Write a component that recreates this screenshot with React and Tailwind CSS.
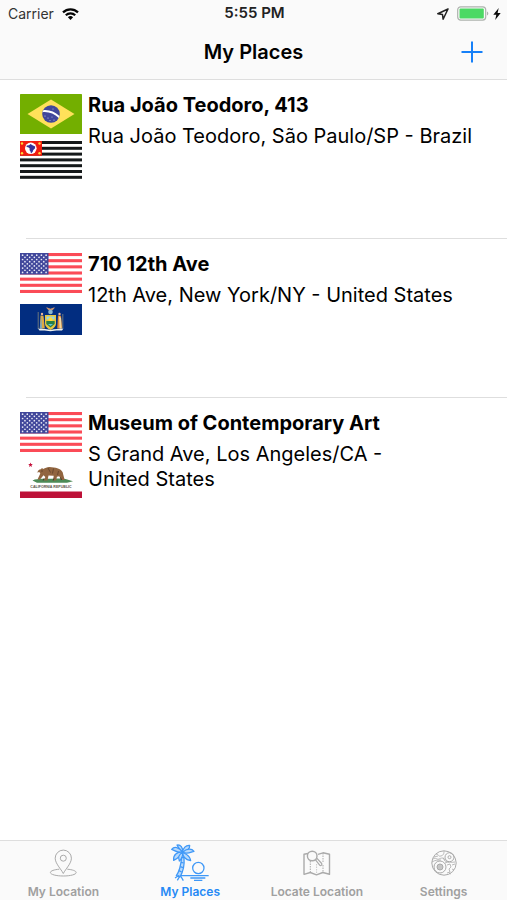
import React, { useState } from "react";

const stripes = [0, 1, 2, 3, 4, 5, 6];

function BrazilFlag() {
  return (
    <svg className="h-10 w-[62px]" viewBox="0 0 62 40" role="img" aria-label="Brazil">
      <rect width="62" height="40" rx="0.6" fill="#73af00" />
      <path d="M31 5.5 54.5 20 31 34.5 7.5 20Z" fill="#ffe15a" />
      <circle cx="31" cy="20" r="8.8" fill="#41479b" />
      <path d="M23.3 16.2c5.800-.6 11.600 1.500 16.200 5.900l-.7 2c-4.500-4.600-10.300-6.600-16.500-5.900Z" fill="#fff" />
      <g fill="#c9cbe6">
        <circle cx="25" cy="22" r="0.6" />
        <circle cx="28" cy="24" r="0.6" />
        <circle cx="32" cy="23" r="0.5" />
        <circle cx="34" cy="26" r="0.6" />
        <circle cx="30" cy="26.500" r="0.5" />
        <circle cx="33" cy="15" r="0.5" />
      </g>
    </svg>
  );
}

function SaoPauloFlag() {
  return (
    <svg className="h-[38px] w-[62px]" viewBox="0 0 62 38" role="img" aria-label="São Paulo">
      <rect width="62" height="38" fill="#fff" />
      {stripes.map((i) => (
        <rect key={i} y={i * 5.8} width="62" height="3" fill="#15191a" />
      ))}
      <rect width="22" height="14.800" fill="#f01c10" />
      <circle cx="10.800" cy="7.300" r="5.800" fill="#fff" />
      <path d="M6.800 4.500 9 4.200l1.500-1.200 2 1.300 2.700 1.200-.3 2-1.600 1.500-.6 1.800-1.700 1.700-.5-2-1-1.500.2-1.500-1.500-1.200-1.700-.2Z" fill="#34349a" />
      <g fill="#ffd83b">
        <circle cx="2" cy="2.500" r="1.200" />
        <circle cx="2" cy="12.300" r="1.200" />
        <circle cx="19.500" cy="2.500" r="1.200" />
        <circle cx="19.500" cy="12.300" r="1.200" />
      </g>
    </svg>
  );
}

function UsaFlag() {
  const stars = [];
  for (let r = 0; r < 9; r++) {
    const n = r % 2 ? 5 : 6;
    for (let c = 0; c < n; c++) {
      stars.push([2.6 + c * 4.7 + (r % 2 ? 2.35 : 0), 2.2 + r * 2.15]);
    }
  }
  return (
    <svg className="h-10 w-[62px]" viewBox="0 0 62 40" role="img" aria-label="United States">
      <rect width="62" height="40" fill="#fff" />
      {stripes.map((i) => (
        <rect key={i} y={i * 6.154} width="62" height="3.077" fill="#fb4b57" />
      ))}
      <rect width="28.500" height="21.500" fill="#41479b" />
      {stars.map(([x, y]) => (
        <circle key={x + "-" + y} cx={x} cy={y} r="0.85" fill="#e9eaf6" />
      ))}
    </svg>
  );
}

function NewYorkFlag() {
  return (
    <svg className="h-[31px] w-[62px]" viewBox="0 0 62 31" role="img" aria-label="New York">
      <rect width="62" height="31" fill="#022d80" />
      <path d="M26 3.500c2 0 3 .6 4.500 1.300C32 4.100 33 3.500 35 3.500l-2.400 2.800h-4Z" fill="#c79470" />
      <circle cx="30.500" cy="8" r="2.300" fill="#8bb4cf" />
      <path d="M25 11h11v8.500c0 3-3 5.500-5.500 6.500-2.500-1-5.500-3.500-5.500-6.500Z" fill="#e6c63f" />
      <path d="M26.500 12.500h8v3h-8Z" fill="#91d3ef" />
      <circle cx="30.500" cy="15.500" r="2.200" fill="#ffdc38" />
      <path d="M26.300 17h8.400v3l-4.200 3.500-4.200-3.500Z" fill="#287e47" />
      <path d="M28 20h5l-2.500 2Z" fill="#5ec4dd" />
      <circle cx="22" cy="10" r="1.200" fill="#e8b69b" />
      <circle cx="39.500" cy="10" r="1.200" fill="#e8b69b" />
      <path d="m20.500 11.500 3 .3 1.300 12.700h-5Z" fill="#dda943" />
      <path d="m21.300 12-1.500 12.500h2Z" fill="#6ca8d3" />
      <path d="m38 11.500 3 .3 1.200 12.700h-5Z" fill="#e58b32" />
      <path d="m39 12 .6 12.500h2L41 14Z" fill="#efd9a2" />
      <path d="M18.200 8v17M42.800 10v14" stroke="#b4a77c" strokeWidth="0.6" />
      <path d="M18 24.500c4 .5 7 0 12.500 1.500 5-1.500 8.500-1 13-1.500l-1.500 2c-4 0-8-.2-11.500.8-4-1-7-.8-11-.8Z" fill="#eef0ea" />
    </svg>
  );
}

function CaliforniaFlag() {
  return (
    <svg className="h-10 w-[62px]" viewBox="0 0 62 40" role="img" aria-label="California">
      <rect width="62" height="40" fill="#fff" />
      <path d="m10.500 4.500.6 1.600h1.700l-1.300 1.100.5 1.700-1.500-1-1.500 1 .5-1.700-1.300-1.100h1.700Z" fill="#c5133d" />
      <path d="M12.500 22.500c3-1.800 6-1 9-1.800 8 .5 16-1 24 .3l7.500 2.300-6 1.400H17Z" fill="#4d8b57" />
      <path d="M17.500 14.300c.3-1.700 1.500-2.700 3.300-3l1.200-1.200 1.200.8c2.300-.6 4-2 6.300-1.800 3 .5 5.500.4 8.500 1.400 3.500 1.300 5 3.300 5.200 6l1.500 5.500h-3.500l-2-3.700-2.300.5-.7 3.700h-3.200l.7-4.700-5.200-.4-1 5.100h-3.400l1.200-3.500-1.800-1.800-3.500 4.300h-2.500l2.800-5.900-1-1.600-2.800.7Z" fill="#91653f" />
      <path d="m28 10 2.500 4.500m3-4-1 5m6-2.500-1 4M21 13h2" stroke="#5f4029" strokeWidth="0.8" />
      <path d="m24 20.500-.8 2m10.800-2-.8 2m7.300-3 1 2.500" stroke="#47362a" />
      <text x="31" y="30" textAnchor="middle" fontFamily="Liberation Sans, sans-serif" fontSize="3.600" fontWeight="700" fill="#5c5348">CALIFORNIA REPUBLIC</text>
      <rect y="33.500" width="62" height="6.500" fill="#bd1138" />
    </svg>
  );
}

function WifiIcon() {
  return (
    <svg className="h-3 w-[17px]" viewBox="0 0 17 12" fill="none" stroke="#050505" strokeWidth="2.200" aria-hidden="true">
      <path d="M1 4.400a10.700 10.700 0 0 1 15 0M3.800 7.300a6.700 6.700 0 0 1 9.400 0" />
      <path d="m8.500 12-2.600-2.700a3.700 3.700 0 0 1 5.200 0Z" fill="#050505" stroke="none" />
    </svg>
  );
}

function StatusIcons() {
  return (
    <div className="flex items-center">
      <svg className="h-3 w-3" viewBox="0 0 12 12" fill="none" stroke="#222" strokeWidth="1.500" strokeLinejoin="round" aria-hidden="true">
        <path d="M11 1 .8 5.700l4.700.8.600 4.700Z" />
      </svg>
      <svg className="ml-2 h-4 w-8" viewBox="0 0 32 16" aria-hidden="true">
        <rect x="0.700" y="0.800" width="28" height="13.300" rx="3" fill="#fafafa" stroke="#adb2ad" strokeWidth="1.200" />
        <rect x="2.500" y="2.600" width="24.300" height="9.800" rx="1" fill="#4cd964" />
        <path d="M30 5.400c1.800.7 1.800 3.500 0 4.200Z" fill="#adb2ad" />
      </svg>
      <svg className="ml-1 h-3 w-2" viewBox="0 0 8 12" fill="#0b0b0b" aria-hidden="true">
        <path d="M5.700 0 .3 6.800h3L2.200 12l5.500-7H4.600Z" />
      </svg>
    </div>
  );
}

function PinIcon() {
  return (
    <svg className="h-7 w-7" viewBox="0 0 28 28" fill="none" stroke="currentColor" strokeWidth="1" aria-hidden="true">
      <path d="M14.300 24.500C12 20 6.200 14.500 6.200 9.200a8.100 8.100 0 0 1 16.200 0c0 5.300-5.800 10.800-8.100 15.300Z" />
      <circle cx="14.300" cy="9.200" r="3" />
      <path d="M10.300 20.200c-5 .4-8.900 1.700-8.900 3.300 0 2 5.800 3.500 12.900 3.500s12.900-1.500 12.900-3.500c0-1.600-3.900-2.900-8.900-3.300" />
    </svg>
  );
}

function PalmIcon() {
  return (
    <svg className="h-[38px] w-[38px]" viewBox="36 12 114 114" fill="none" stroke="currentColor" strokeWidth="3.800" strokeLinejoin="round" aria-hidden="true">
      <g fill="#b9dafc">
        <path d="M71 37C66 30 59 27 54 15c11-2 18 8 17 22Z" />
        <path d="M71 37c1-13 9-22 21-21 1 10-9 17-21 21Z" />
        <path d="M71 37C60 21 46 18 38 28c9 2 15 12 33 9Z" />
        <path d="M71 37c12-12 27-12 34-3-10 2-18 10-34 3Z" />
        <path d="M71 37c-17-2-29 7-27 24 10-5 19-10 27-24Z" />
        <path d="M71 37c-10 5-15 15-10 26 6-5 11-13 10-26Z" />
        <path d="M71 37c7 4 22 8 24 25-13-2-24-10-24-25Z" />
        <path d="M68 52c-2 20-4 38-16 55l11 4c10-17 14-36 12-58Z" />
      </g>
      <path d="m66 67 8 2m-10 11 8 3m-12 9 8 4M61 106l-13 8m14-5-7 12m10-13 8 14" />
      <circle cx="118" cy="84" r="17" />
      <path d="M66 107h83M94 114h45M105 121h25" />
    </svg>
  );
}

function MapIcon() {
  return (
    <svg className="h-7 w-7" viewBox="0 0 28 28" fill="none" stroke="currentColor" strokeWidth="1.400" strokeLinejoin="round" aria-hidden="true">
      <path d="M5 4.500 1 5.300v20l6.300-1.800 6.200 2.300 6.300-2.300 6.700 1.800v-20L20 3.800l-5 1.500" />
      <path d="M7.300 12v11M20 4v9m0 3v7" strokeDasharray="1.500 1" strokeWidth="1" />
      <path d="M13.600 15v10" strokeDasharray="1.500 1" strokeWidth="0.600" />
      <circle cx="9.200" cy="7" r="4.800" fill="#fafafa" />
      <path d="m12.500 10.800 1.500-1.500 4.700 5.200c.7 1.700-1 2.500-2 1.700Z" fill="#fafafa" strokeWidth="1.200" />
    </svg>
  );
}

function GearsIcon() {
  return (
    <svg className="h-[26px] w-[26px]" viewBox="0 0 26 26" fill="none" stroke="currentColor" strokeWidth="1" aria-hidden="true">
      <circle cx="13" cy="13" r="12.200" />
      <circle cx="9" cy="17" r="6" />
      <circle cx="9" cy="17" r="3" fill="#c6c6c6" />
      <circle cx="18.500" cy="7.200" r="4.500" />
      <circle cx="18.500" cy="7.200" r="1.500" />
      <path d="M5 4c3 0 2 3 5 2s3-3 3-5M2 9c3-2 4 1 6 0s5-2 6 1M1 12c3-2 6-2 9-2m4 3c3-2 6 0 10-1m-8 3 3-1 1 3-2 2 1 3-3 1m5-8 3-1m-3 5 2 1m-5 3 2 1M3 7l4-1m5 2 2 3 4 1" strokeWidth="0.800" />
    </svg>
  );
}

const places = [
  { title: "Rua João Teodoro, 413", address: "Rua João Teodoro, São Paulo/SP - Brazil", Country: BrazilFlag, State: SaoPauloFlag, gap: "gap-[7px]" },
  { title: "710 12th Ave", address: "12th Ave, New York/NY - United\u00a0States", Country: UsaFlag, State: NewYorkFlag, gap: "gap-[11px]" },
  { title: "Museum of Contemporary Art", address: "S Grand Ave, Los Angeles/CA - United\u00a0States", Country: UsaFlag, State: CaliforniaFlag, gap: "gap-[6px]" },
];

const tabs = [
  { label: "My Location", Icon: PinIcon },
  { label: "My Places", Icon: PalmIcon },
  { label: "Locate Location", Icon: MapIcon },
  { label: "Settings", Icon: GearsIcon },
];

export default function App() {
  const [active, setActive] = useState("My Places");
  return (
    <div className="flex min-h-screen flex-col bg-white font-['Inter',sans-serif] text-black">
      <header className="border-b border-[#dedede] bg-[#fafafa] pb-[3px]">
        <div className="grid h-[27px] grid-cols-[1fr_auto_1fr] items-center pl-2 pr-[6px]">
          <div className="flex items-center gap-2 text-sm text-[#333]">
            <span>Carrier</span>
            <WifiIcon />
          </div>
          <time className="text-[15px] font-semibold text-[#222]">5:55 PM</time>
          <div className="flex justify-end">
            <StatusIcons />
          </div>
        </div>
        <div className="grid h-[49px] grid-cols-[1fr_auto_1fr] items-center px-6">
          <h1 className="col-start-2 text-xl font-semibold">My Places</h1>
          <button type="button" aria-label="Add place" className="justify-self-end text-[#1680f8]">
            <svg className="h-[22px] w-[22px]" viewBox="0 0 22 22" stroke="currentColor" strokeWidth="2" aria-hidden="true">
              <path d="M11 0.500v21M0.500 11h21" />
            </svg>
          </button>
        </div>
      </header>

      <main className="flex-1">
        <ul>
          {places.map(({ title, address, Country, State, gap }, i) => (
            <li key={title}>
              <div className="flex min-h-[158px] gap-[6px] pl-5 pt-[14px]">
                <div className={"flex shrink-0 flex-col " + gap}>
                  <Country />
                  <State />
                </div>
                <div className="min-w-0 flex-1 pr-5">
                  <h2 className="text-xl leading-[22px] font-bold">{title}</h2>
                  <p className="mt-2 text-xl leading-[25px]">{address}</p>
                </div>
              </div>
              {i < places.length - 1 && <hr className="ml-[26px] border-[#dedede]" />}
            </li>
          ))}
        </ul>
      </main>

      <nav className="grid grid-cols-4 border-t border-[#dedede] bg-[#fafafa]">
        {tabs.map(({ label, Icon }) => {
          const on = active === label;
          return (
            <button
              key={label}
              type="button"
              onClick={() => setActive(label)}
              aria-current={on ? "page" : undefined}
              className={"flex flex-col items-center " + (on ? "text-[#2589f5]" : "text-[#a0a0a0]")}
            >
              <span className={"flex h-[43px] items-center " + (on ? "text-[#3f98f7]" : "text-[#aaaaaa]")}>
                <Icon />
              </span>
              <span className="text-xs font-semibold whitespace-nowrap">{label}</span>
            </button>
          );
        })}
      </nav>
    </div>
  );
}
